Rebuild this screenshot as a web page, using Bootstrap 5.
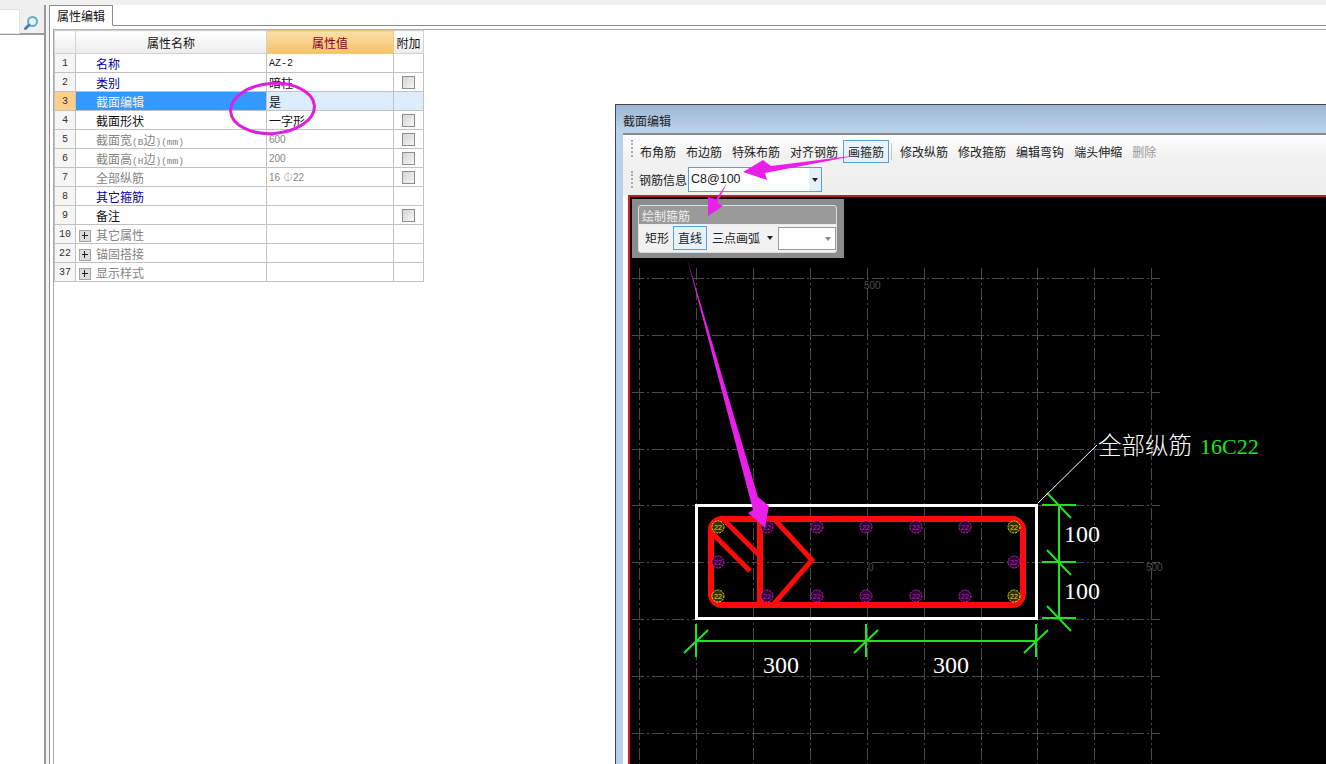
<!DOCTYPE html>
<html lang="zh">
<head>
<meta charset="utf-8">
<title>属性编辑</title>
<link href="https://cdn.jsdelivr.net/npm/bootstrap@5.3.0/dist/css/bootstrap.min.css" rel="stylesheet">
<style>
html,body{height:764px;overflow:hidden;background:#fff}
body{font:12px/1 "Noto Sans CJK SC","Liberation Sans",sans-serif;color:#111;position:relative}
.top-strip{height:5px;background:#f0f0f0}
.shell{height:759px}
.side{width:46px;border-right:2px solid #9a9a9a;flex:none}
.side-search{height:30px;padding-top:4px;background:#f0f0f0;border-bottom:2px solid #9a9a9a}
.side-input{width:20px;height:25px;background:#fff;border:1px solid #e2e2e2;border-left:0}
.side-icon{margin-left:3px;margin-top:6px}
.gutter{width:3px;background:#f4f4f4;flex:none}
.pane{border-left:1px solid #8c8c8c;min-width:0}
.tab-row{height:21px;border-bottom:1px solid #8c8c8c;padding:0}
.tab-row .nav-link,.tab-row .nav-link.active{height:21px;width:63px;margin:0 0 -1px;padding:3px 0 0 7px;border:1px solid #8c8c8c;border-left:0;border-bottom-color:#fff;border-radius:0;background:#fff;color:#111;font-size:12px;line-height:14px}
.pane-body{border-top:1px solid #b0b0b0;border-left:1px solid #a8a8a8;margin:3px 0 0 3px}
.grid-wrap{width:369px;flex:none}
.prop-grid{table-layout:fixed;width:369px;border-collapse:collapse;margin:0}
.prop-grid>*>tr>*{height:19px;padding:0;border:1px solid #c2c2c2;background:#fff;font-size:12px;line-height:17px;font-weight:400;color:#111;box-shadow:none;vertical-align:middle;white-space:nowrap;overflow:hidden}
.prop-grid>thead>tr>*{height:23px;background:linear-gradient(#fff,#ececec);text-align:center;font-size:12px;border-color:#d2d2d2}
.prop-grid>thead>tr>.val-head{background:linear-gradient(#fae0a8,#f5c268);color:#8a0028;border-color:#f0c878}
.prop-grid>tbody>tr>.no{background:#f6f6f6;text-align:center;color:#333;font:10px/17px "Liberation Mono",monospace}
.prop-grid>tbody>tr>.nm{padding-left:20px}
.prop-grid>tbody>tr>.nm-exp{padding-left:3px}
.prop-grid>tbody>tr>.vl{padding-left:2px}
.prop-grid>tbody>tr>.ck{text-align:center}
.prop-grid>tbody>tr>.navy{color:#0000a0}
.prop-grid>tbody>tr>.dim{color:#848484}
.prop-grid>tbody>tr>.mono{font:10px/17px "Liberation Mono",monospace;color:#222}
.prop-grid>tbody>tr>.dimval{font:10px/17px "Liberation Sans",sans-serif;color:#858585}
.prop-grid>tbody>tr.sel>.no{background:#ffcf8a}
.prop-grid>tbody>tr.sel>.nm{background:#3399ff;color:#eef6ff}
.prop-grid>tbody>tr.sel>.tint{background:#deedfb}
.latin-tight{font:9.5px "Liberation Mono",monospace}
.box-check{display:block;width:13px;height:13px;margin:1px auto 0;border:1px solid #8e8e8e;background:linear-gradient(135deg,#d4d4d4,#f6f6f6)}
.exp-box{display:inline-block;width:12px;height:12px;margin-right:5px;vertical-align:-2px;border:1px solid #a4a4a4;background:#dcdcdc;position:relative}
.exp-box::before{content:"";position:absolute;left:2px;right:2px;top:4px;height:1px;background:#222}
.exp-box::after{content:"";position:absolute;top:1px;bottom:2px;left:4px;width:1px;background:#222}
.sec-win{margin:74px 0 0 192px;flex:1;min-width:0;border:1px solid #444;border-bottom:0;border-right:0;height:660px;background:#b9d1ea}
.sec-title{height:28px;padding:9px 0 0 7px;background:linear-gradient(#9cb7d5,#bdd4ec);font-size:12px;color:#222;line-height:14px}
.sec-body{margin-left:7px;height:632px;border-top:2px solid #8c8c8c;background:#fff}
.tools{height:60px;padding:5px 0 0 8px;background:linear-gradient(#fff 0,#f2f2f2 35%,#eeeeee)}
.tool-row{height:23px;gap:10px;line-height:23px;color:#222}
.tool-row+.tool-row{margin-top:4px;height:25px;gap:1px;line-height:25px}
.grip{width:2px;height:17px;border-left:2px dotted #aaa;margin-right:-3px;flex:none}
.grip-info{margin-right:5px;margin-top:4px}
.tool-on{padding:0 4px;margin:0 -5px;border:1px solid #5a9fd8;background:#e8f2fb;line-height:21px;height:23px}
.tool-sep{width:1px;height:17px;background:#c8c8c8;margin:3px -2px 0 -3px}
.tool-off{color:#9a9a9a}
.combo{width:134px;height:25px;border:1px solid #5a9fd8;background:#fff;font:12.5px/23px "Liberation Sans",sans-serif;padding-left:2px;position:relative}
.combo-btn{position:absolute;right:0;top:0;bottom:0;width:12px;background:#e6f0fa}
.combo-btn::after,.mini-arrow::after{content:"";position:absolute;left:3px;top:10px;border:3px solid transparent;border-top:4px solid #222;border-bottom:0}
.draw-area{height:569px;margin-left:5px;border-left:2px solid #e0141e;border-top:2px solid #b8202a;background:#000;position:relative;overflow:hidden}
.draw-area svg{display:block}
.float-panel{position:absolute;left:2px;top:2px;width:212px;height:59px;background:#8c8c8c;padding:6px 7px 5px 6px}
.float-inner{height:48px;border-radius:3px;overflow:hidden;border:1px solid #ddd;background:#f2f2f2}
.float-head{height:19px;background:#9a9a9a;color:#eee;padding-left:3px;line-height:20px;border-bottom:1px solid #eee}
.float-tools{height:27px;padding-left:6px;color:#222;line-height:25px;white-space:nowrap}
.float-tools>span{flex:none}
.float-tools>.float-on{width:34px;height:24px;line-height:22px;text-align:center;border:1px solid #5a9fd8;background:#e8f2fb;margin:1px 5px 0 4px}
.float-tools>.mini-arrow{position:relative;width:8px;margin-left:6px;color:transparent}
.mini-arrow::after{left:1px;top:11px}
.float-tools>.mini-combo{width:58px;height:23px;margin:2px 0 0 4px;border:1px solid #999;background:#fff;position:relative}
.mini-combo::after{content:"";position:absolute;right:4px;top:9px;border:3px solid transparent;border-top:4px solid #888;border-bottom:0}
.ink{position:absolute;left:0;top:0;pointer-events:none}
</style>
</head>
<body>
<div class="top-strip"></div>
<div class="shell d-flex">
  <aside class="side">
    <div class="side-search d-flex">
      <div class="side-input"></div>
      <svg class="side-icon" width="16" height="16" viewBox="0 0 16 16"><circle cx="9.5" cy="6.5" r="4.5" fill="#e4f2fb" stroke="#6aa9cf" stroke-width="2"/><path d="M6 10 2.5 13.5" stroke="#3d86b4" stroke-width="3" stroke-linecap="round"/></svg>
    </div>
  </aside>
  <div class="gutter"></div>
  <main class="pane flex-grow-1 d-flex flex-column">
    <ul class="nav nav-tabs tab-row"><li class="nav-item"><a class="nav-link active" href="#">属性编辑</a></li></ul>
    <div class="pane-body d-flex flex-grow-1">
      <div class="grid-wrap">
        <table class="table prop-grid">
          <colgroup><col style="width:21px"><col style="width:191px"><col style="width:127px"><col style="width:30px"></colgroup>
          <thead><tr><th></th><th>属性名称</th><th class="val-head">属性值</th><th>附加</th></tr></thead>
          <tbody>
            <tr><td class="no">1</td><td class="nm navy">名称</td><td class="vl mono">AZ-2</td><td></td></tr>
            <tr><td class="no">2</td><td class="nm navy">类别</td><td class="vl">暗柱</td><td class="ck"><span class="box-check"></span></td></tr>
            <tr class="sel"><td class="no">3</td><td class="nm">截面编辑</td><td class="vl tint">是</td><td class="tint"></td></tr>
            <tr><td class="no">4</td><td class="nm">截面形状</td><td class="vl">一字形</td><td class="ck"><span class="box-check"></span></td></tr>
            <tr><td class="no">5</td><td class="nm dim">截面宽<span class="latin-tight">(B</span>边<span class="latin-tight">)(mm)</span></td><td class="vl dimval">600</td><td class="ck"><span class="box-check"></span></td></tr>
            <tr><td class="no">6</td><td class="nm dim">截面高<span class="latin-tight">(H</span>边<span class="latin-tight">)(mm)</span></td><td class="vl dimval">200</td><td class="ck"><span class="box-check"></span></td></tr>
            <tr><td class="no">7</td><td class="nm dim">全部纵筋</td><td class="vl dimval">16 ⏀22</td><td class="ck"><span class="box-check"></span></td></tr>
            <tr><td class="no">8</td><td class="nm navy">其它箍筋</td><td class="vl"></td><td></td></tr>
            <tr><td class="no">9</td><td class="nm">备注</td><td class="vl"></td><td class="ck"><span class="box-check"></span></td></tr>
            <tr><td class="no">10</td><td class="nm-exp dim"><span class="exp-box"></span>其它属性</td><td></td><td></td></tr>
            <tr><td class="no">22</td><td class="nm-exp dim"><span class="exp-box"></span>锚固搭接</td><td></td><td></td></tr>
            <tr><td class="no">37</td><td class="nm-exp dim"><span class="exp-box"></span>显示样式</td><td></td><td></td></tr>
          </tbody>
        </table>
      </div>
      <section class="sec-win">
        <div class="sec-title">截面编辑</div>
        <div class="sec-body">
          <div class="tools">
            <div class="tool-row d-flex">
              <span class="grip"></span><span>布角筋</span><span>布边筋</span><span>特殊布筋</span><span>对齐钢筋</span><span class="tool-on">画箍筋</span><span class="tool-sep"></span><span>修改纵筋</span><span>修改箍筋</span><span>编辑弯钩</span><span>端头伸缩</span><span class="tool-off">删除</span>
            </div>
            <div class="tool-row d-flex">
              <span class="grip grip-info"></span><span>钢筋信息</span>
              <div class="combo">C8@100<span class="combo-btn"></span></div>
            </div>
          </div>
          <div class="draw-area">
            <svg width="696" height="567" viewBox="630 197 696 567" xmlns="http://www.w3.org/2000/svg">
              <g stroke="#4a4a4a" stroke-width="1" stroke-dasharray="12 3 2 3" fill="none">
                <path d="M639.500 268V764M696.500 268V764M753.500 268V764M810.500 268V764M867.500 268V764M924.500 268V764M981.500 268V764M1037.500 268V764M1094.500 268V764M1151.500 268V764"/>
                <path d="M632 278.500H1160M632 335.500H1160M632 392.500H1160M632 449.500H1160M632 505.500H1160M632 562.500H1160M632 619.500H1160M632 676.500H1160M632 733.500H1160"/>
              </g>
              <g fill="#4c4c4c" font-family="Liberation Sans, sans-serif" font-size="10">
                <text x="864" y="289">500</text><text x="868" y="571">0</text><text x="1146" y="571">500</text>
              </g>
              <rect x="696.500" y="505.500" width="340" height="113" fill="none" stroke="#fff" stroke-width="3"/>
              <g fill="none" stroke="#ff0a0a" stroke-width="6">
                <rect x="711" y="519" width="312" height="86" rx="11"/>
                <path d="M760 519V600Q760 605 766 605"/>
                <path d="M724 520 762 558M712 533 750 571M775 520 812 560 773 605" stroke-width="5"/>
              </g>
              <defs>
                <g id="barM"><circle r="6" fill="#300030" stroke="#d028d0" stroke-dasharray="2 1"/><text y="2.500" text-anchor="middle" font-size="7" font-family="Liberation Sans,sans-serif" fill="#b428b4">22</text></g>
                <g id="barY"><circle r="6" fill="#303000" stroke="#f4e820" stroke-dasharray="2 1"/><text y="2.500" text-anchor="middle" font-size="7" font-family="Liberation Sans,sans-serif" fill="#e8dc20">22</text></g>
              </defs>
              <use href="#barY" x="718" y="527"/><use href="#barY" x="718" y="596"/><use href="#barY" x="1014" y="527"/><use href="#barY" x="1014" y="596"/>
              <use href="#barM" x="718" y="562"/><use href="#barM" x="1014" y="562"/>
              <use href="#barM" x="767" y="527"/><use href="#barM" x="817" y="527"/><use href="#barM" x="866" y="527"/><use href="#barM" x="916" y="527"/><use href="#barM" x="965" y="527"/>
              <use href="#barM" x="767" y="596"/><use href="#barM" x="817" y="596"/><use href="#barM" x="866" y="596"/><use href="#barM" x="916" y="596"/><use href="#barM" x="965" y="596"/>
              <g stroke="#1ee61e" stroke-width="2" fill="none">
                <path d="M696 641H1036M696 624V657M684 653 708 630M866 624V657M854 653 878 630M1036 624V657M1024 653 1048 630"/>
                <path d="M1059 505V618M1042 505H1076M1047 493 1071 518M1042 562H1076M1047 550 1071 575M1042 618H1076M1047 606 1071 631"/>
              </g>
              <path d="M1038 503 1097 445" stroke="#fff" stroke-width="1"/>
              <g fill="#fff" font-family="Liberation Serif, serif" font-size="24">
                <text x="1064" y="542">100</text><text x="1064" y="599">100</text><text x="763" y="673">300</text><text x="933" y="673">300</text>
              </g>
              <text x="1098" y="454" fill="#fff" font-family="Noto Sans CJK SC, sans-serif" font-size="23.500" font-weight="300">全部纵筋</text>
              <text x="1200" y="454" fill="#1ee61e" font-family="Liberation Serif, serif" font-size="22">16C22</text>
            </svg>
            <div class="float-panel">
              <div class="float-inner">
                <div class="float-head">绘制箍筋</div>
                <div class="float-tools d-flex">
                  <span>矩形</span><span class="float-on">直线</span><span>三点画弧</span><span class="mini-arrow"></span><span class="mini-combo"></span>
                </div>
              </div>
            </div>
          </div>
        </div>
      </section>
    </div>
  </main>
</div>
<svg class="ink" width="1326" height="764" viewBox="0 0 1326 764" xmlns="http://www.w3.org/2000/svg">
  <ellipse cx="272.500" cy="108.500" rx="42" ry="25" transform="rotate(-4 272.500 108.500)" fill="none" stroke="#e020dc" stroke-width="3"/>
  <g fill="#ea1fea">
    <path d="M859 155 771 166 763 160 743 172 767 180 765 173Z"/>
    <path d="M727 183 716 199 708 197 708 216 723 206 717 203Z"/>
    <path d="M687 258 758 497 769 506 765 528 748 513 753 510Z"/>
  </g>
</svg>
<script src="https://cdn.jsdelivr.net/npm/bootstrap@5.3.0/dist/js/bootstrap.bundle.min.js"></script>
</body>
</html>
